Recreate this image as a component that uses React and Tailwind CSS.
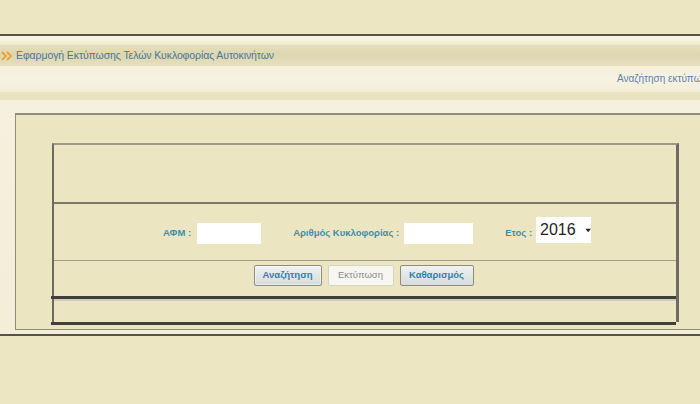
export default function App() {
  return (
    <div className="w-[700px] h-[404px] overflow-hidden bg-[#ece6c3] font-['Liberation_Sans',sans-serif]">
      {/* top blank area */}
      <div className="h-[34px]" />
      <div className="h-[2px] bg-[#55534a]" />
      <div className="h-[9px] bg-gradient-to-b from-[#f8f5e6] to-[#efeacf]" />
      {/* title bar */}
      <div className="h-[21px] flex items-center bg-gradient-to-b from-[#e4deba] via-[#ddd6b0] to-[#e6e0be]">
        <svg width="12" height="10" viewBox="0 0 12 10" className="ml-[1px]">
          <path d="M1 1 L5 5 L1 9" fill="none" stroke="#f0a030" strokeWidth="1.8" />
          <path d="M6 1 L10 5 L6 9" fill="none" stroke="#f0a030" strokeWidth="1.8" />
        </svg>
        <span className="ml-[3px] text-[10.5px] text-[#4a7898] tracking-[-0.1px]">
          Εφαρμογή Εκτύπωσης Τελών Κυκλοφορίας Αυτοκινήτων
        </span>
      </div>
      {/* sub header with link */}
      <div className="h-[26px] flex items-center justify-end overflow-hidden bg-gradient-to-b from-[#f3efda] via-[#f7f3e3] to-[#f3eed8]">
        <span className="whitespace-nowrap text-[10px] text-[#5f83a6] mr-[-18px] mt-[-2px]">
          Αναζήτηση εκτύπωσης
        </span>
      </div>
      <div className="h-[8px] bg-[#e9e3c2]" />
      {/* framed content */}
      <div className="bg-gradient-to-b from-[#f5f1de] to-[#f3eed8] pl-[15px] pt-[13px] pb-[4px]">
        <div className="h-[217px] border-t-2 border-l border-b border-[#8f8c7c] bg-[#ebe5c2] pl-[36px] pt-[28px]">
          <div className="w-[627px] flex flex-col border-l-2 border-r-[3px] border-t-2 border-[#6e6c62] border-t-[#9b998c]">
            {/* empty row */}
            <div className="h-[57px]" />
            <div className="h-[2px] bg-[#7a786c]" />
            {/* search fields */}
            <div className="h-[56px] flex items-center pl-[109px] pt-[2px]">
              <span className="text-[9.5px] font-bold text-[#3e8fad]">ΑΦΜ :</span>
              <div className="ml-[6px] w-[64px] h-[21px] bg-white" />
              <span className="ml-[32px] text-[9.5px] font-bold text-[#3e8fad]">Αριθμός Κυκλοφορίας :</span>
              <div className="ml-[5px] w-[69px] h-[21px] bg-white" />
              <span className="ml-[32px] text-[9.5px] font-bold text-[#3e8fad]">Ετος :</span>
              <div className="ml-[4px] w-[55px] h-[26px] bg-white flex items-center pl-[4px] mt-[-6px]">
                <span className="text-[16px] text-[#1e1e1e] leading-none">2016</span>
                <svg width="7" height="5" viewBox="0 0 7 5" className="ml-[9px]">
                  <path d="M0.5 0.5 L6.5 0.5 L3.5 4.5 Z" fill="#222" />
                </svg>
              </div>
            </div>
            <div className="h-[1px] bg-[#a29f8e]" />
            {/* action buttons */}
            <div className="h-[35px] flex items-center justify-center gap-[6px] pr-[3px] pb-[6px]">
              <button className="w-[68px] h-[21px] rounded-[2px] border border-[#8e8c80] bg-gradient-to-b from-[#f0f2f2] to-[#d6dbdd] text-[9.5px] font-bold text-[#2f82ab] shadow-[inset_0_0_0_1px_#ffffff80]">
                Αναζήτηση
              </button>
              <button className="w-[66px] h-[21px] rounded-[2px] border border-[#d6d3c6] bg-[#f7f6f0] text-[9.5px] text-[#8c8c8c]">
                Εκτύπωση
              </button>
              <button className="w-[74px] h-[21px] rounded-[2px] border border-[#8e8c80] bg-gradient-to-b from-[#f0f2f2] to-[#d6dbdd] text-[9.5px] font-bold text-[#2f82ab]">
                Καθαρισμός
              </button>
            </div>
            <div className="h-[3px] bg-[#403f39] ml-[-3px]" />
            <div className="h-[2px] bg-[#cfcdc2]" />
            <div className="h-[21px]" />
            <div className="h-[3px] bg-[#403f39] ml-[-3px] mb-[-3px]" />
          </div>
        </div>
      </div>
      <div className="h-[2px] bg-[#55534a]" />
    </div>
  );
}
